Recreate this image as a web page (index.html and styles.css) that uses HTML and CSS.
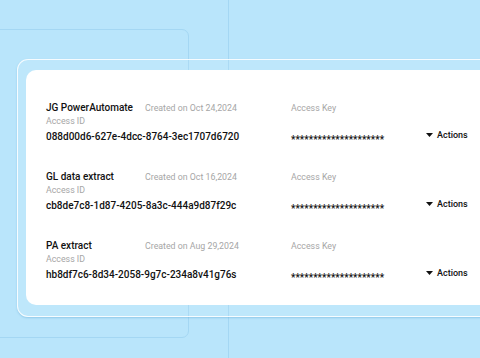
FILE: index.html
```html
<!DOCTYPE html>
<html lang="en">
<head>
    <meta charset="UTF-8">
    <meta name="viewport" content="width=device-width, initial-scale=1.0">
    <title>Access Keys</title>
    <link rel="stylesheet" href="styles.css">
</head>
<body>
    <div class="stage">
        <!-- decorative panels behind the card -->
        <div class="deco-box"></div>
        <div class="deco-line"></div>

        <div class="frame">
            <div class="card">
                <div class="key-row">
                    <div class="name">JG PowerAutomate</div>
                    <div class="meta">Created on Oct 24,2024</div>
                    <div class="meta">Access Key</div>
                    <div></div>
                    <div class="label">Access ID</div>
                    <div class="key-id">088d00d6-627e-4dcc-8764-3ec1707d6720</div>
                    <div class="secret">*********************</div>
                    <div class="actions"><svg width="7" height="4" viewBox="0 0 7 4"><path d="M0 0h7L3.5 4z" fill="#111"/></svg>Actions</div>
                </div>
                <div class="key-row">
                    <div class="name">GL data extract</div>
                    <div class="meta">Created on Oct 16,2024</div>
                    <div class="meta">Access Key</div>
                    <div></div>
                    <div class="label">Access ID</div>
                    <div class="key-id">cb8de7c8-1d87-4205-8a3c-444a9d87f29c</div>
                    <div class="secret">*********************</div>
                    <div class="actions"><svg width="7" height="4" viewBox="0 0 7 4"><path d="M0 0h7L3.5 4z" fill="#111"/></svg>Actions</div>
                </div>
                <div class="key-row">
                    <div class="name">PA extract</div>
                    <div class="meta">Created on Aug 29,2024</div>
                    <div class="meta">Access Key</div>
                    <div></div>
                    <div class="label">Access ID</div>
                    <div class="key-id">hb8df7c6-8d34-2058-9g7c-234a8v41g76s</div>
                    <div class="secret">*********************</div>
                    <div class="actions"><svg width="7" height="4" viewBox="0 0 7 4"><path d="M0 0h7L3.5 4z" fill="#111"/></svg>Actions</div>
                </div>
            </div>
        </div>
    </div>
</body>
</html>
```

FILE: styles.css
```css
body {
    margin: 0;
    background-color: #b9e5fb;
    font-family: Roboto, "Liberation Sans", sans-serif;
    overflow: hidden;
    height: 358px;
}
.stage {
    position: relative;
    padding: 59px 0 0 17px;
    height: 299px;
    overflow: hidden;
}
.deco-box {
    position: absolute;
    left: -12px;
    top: 29px;
    width: 199px;
    height: 307px;
    border: 1px solid #a4d7f3;
    border-radius: 7px;
}
.deco-line {
    position: absolute;
    left: 228px;
    top: 0;
    width: 1px;
    height: 358px;
    background-color: #a4d7f3;
}
.frame {
    position: relative;
    width: 480px;
    padding: 10px 0 11px 8px;
    background: rgba(255, 255, 255, 0.08);
    border: 1px solid rgba(255, 255, 255, 0.85);
    border-radius: 11px;
    box-shadow: 0 1px 2px rgba(70, 150, 200, 0.35);
}
.card {
    background: #fff;
    border-radius: 10px;
    padding: 29px 0 22px 20px;
    display: flex;
    flex-direction: column;
    gap: 23px;
}
.key-row {
    display: grid;
    grid-template-columns: 99px 146px 135px 1fr;
    grid-template-rows: 15px 13px 18px;
}
.name {
    font-size: 10px;
    font-weight: 500;
    color: #111;
    line-height: 17px;
}
.meta {
    font-size: 8.8px;
    color: #a6a6a6;
    line-height: 18px;
}
.label {
    grid-column: 1 / 5;
    font-size: 8.8px;
    color: #a6a6a6;
    line-height: 14px;
}
.key-id {
    grid-column: 1 / 3;
    font-size: 10px;
    font-weight: 500;
    color: #111;
    line-height: 16px;
    margin-top: 2px;
}
.secret {
    font-size: 10px;
    font-weight: 500;
    color: #111;
    line-height: 16px;
    margin-top: 5px;
}
.actions {
    display: flex;
    align-items: center;
    gap: 4px;
    font-size: 9px;
    font-weight: 500;
    color: #111;
    line-height: 12px;
    margin-top: -2px;
}
```
